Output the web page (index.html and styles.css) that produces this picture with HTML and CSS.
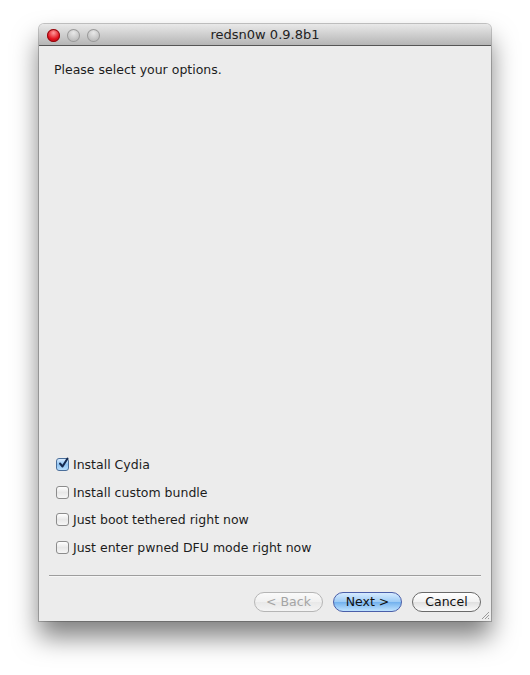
FILE: index.html
```html
<!DOCTYPE html>
<html>
<head>
<meta charset="utf-8">
<title>redsn0w 0.9.8b1</title>
<link rel="stylesheet" href="styles.css">
</head>
<body>
<div class="stage">
  <div class="window">
    <div class="titlebar">
      <div class="lights">
        <span class="light close"></span>
        <span class="light"></span>
        <span class="light"></span>
      </div>
      <div class="title">redsn0w 0.9.8b1</div>
    </div>
    <div class="content">
      <p class="prompt">Please select your options.</p>
      <ul class="options">
        <li class="option"><span class="check checked"><svg viewBox="0 0 13 13" width="13" height="13"><path d="M3 6.5 L5.5 9.5 L10.5 1.5" fill="none" stroke="#15294f" stroke-width="2" stroke-linecap="round" stroke-linejoin="round"/></svg></span>Install Cydia</li>
        <li class="option"><span class="check"></span>Install custom bundle</li>
        <li class="option"><span class="check"></span>Just boot tethered right now</li>
        <li class="option"><span class="check"></span>Just enter pwned DFU mode right now</li>
      </ul>
    </div>
    <div class="separator"></div>
    <div class="buttons">
      <button class="btn disabled">&lt; Back</button>
      <button class="btn default">Next &gt;</button>
      <button class="btn">Cancel</button>
    </div>
    <svg class="grip" viewBox="0 0 11 11" width="11" height="11"><path d="M10 3 L3 10 M10 6 L6 10 M10 9 L9 10" stroke="#9a9a9a" stroke-width="1"/></svg>
  </div>
</div>
</body>
</html>
```
FILE: styles.css
```css
html, body {
  margin: 0;
  padding: 0;
  background: #ffffff;
}
body {
  font-family: "Lucida Grande", "DejaVu Sans", sans-serif;
  font-size: 12px;
  color: #1c1c1c;
}
.stage {
  padding: 24px 0 0 39px;
  min-height: 675px;
  box-sizing: border-box;
}
.window {
  position: relative;
  width: 452px;
  height: 597px;
  background: #ececec;
  display: flex;
  flex-direction: column;
  box-shadow: 0 16px 26px rgba(0,0,0,0.5), 0 0 0 1px rgba(0,0,0,0.22);
  border-radius: 5px 5px 0 0;
}
.titlebar {
  height: 21px;
  flex: none;
  border-bottom: 1px solid #555;
  background: linear-gradient(#e9e9e9, #cfcfcf 50%, #b5b5b5);
  border-radius: 5px 5px 0 0;
  display: flex;
  align-items: center;
  position: relative;
}
.lights {
  display: flex;
  gap: 7px;
  padding-left: 8px;
  padding-top: 1px;
}
.light {
  width: 13px;
  height: 13px;
  border-radius: 50%;
  background: radial-gradient(circle at 50% 30%, #e8e8e8, #c2c2c2 60%, #a8a8a8);
  box-shadow: inset 0 0 0 1px #9a9a9a;
}
.light.close {
  background: radial-gradient(circle at 50% 30%, #ff9a9a, #e2131e 55%, #a50008);
  box-shadow: inset 0 0 0 1px #8b0a10;
}
.title {
  position: absolute;
  left: 0;
  right: 0;
  text-align: center;
  font-size: 13px;
  color: #222;
  top: 3px;
}
.content {
  flex: 1;
  display: flex;
  flex-direction: column;
  justify-content: space-between;
  padding: 16px 0 14px 15px;
}
.prompt {
  margin: 0;
  font-size: 12.5px;
}
.options {
  list-style: none;
  margin: 0;
  padding: 0 0 0 2px;
}
.option {
  height: 27.6px;
  display: flex;
  align-items: center;
  gap: 4px;
  font-size: 12.5px;
}
.check {
  width: 11px;
  height: 11px;
  border: 1px solid #8c8c8c;
  border-radius: 3px;
  background: linear-gradient(#ffffff, #e8e8e8 50%, #f6f6f6);
  position: relative;
  flex: none;
}
.check.checked {
  background: linear-gradient(#d9ecff, #8fc3f2 50%, #b7dcfb);
  border-color: #4a6e9a;
}
.check svg {
  position: absolute;
  left: 0;
  top: -2px;
}
.separator {
  height: 1px;
  background: #9d9d9d;
  margin: 0 10px;
  border-bottom: 1px solid #f6f6f6;
}
.buttons {
  display: flex;
  justify-content: flex-end;
  gap: 10px;
  padding: 15px 10px 9px 0;
}
.btn {
  width: 69px;
  height: 20px;
  border-radius: 10px;
  border: 1px solid #6a6a6a;
  background: linear-gradient(#ffffff, #f1f1f1 50%, #e0e0e0 51%, #fafafa);
  font-family: "Lucida Grande", "DejaVu Sans", sans-serif;
  font-size: 12.5px;
  color: #111;
  padding: 0;
  line-height: 18px;
}
.btn.disabled {
  color: #a4a4a4;
  border-color: #b5b5b5;
  background: linear-gradient(#fafafa, #f0f0f0 50%, #e8e8e8 51%, #f4f4f4);
}
.btn.default {
  border-color: #4a5ea8;
  background: linear-gradient(#d6ebff, #9bcaf5 50%, #72b1ee 51%, #bfe3ff);
}
.grip {
  position: absolute;
  right: 1px;
  bottom: 1px;
}
```
